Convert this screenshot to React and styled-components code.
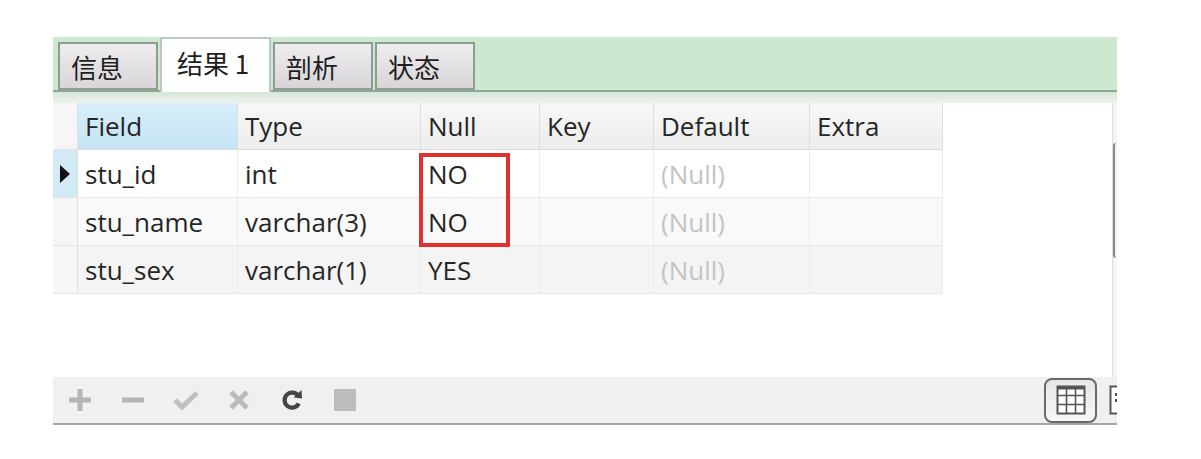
import React from "react";
import styled, { createGlobalStyle } from "styled-components";

const Global = createGlobalStyle`
  html, body {
    margin: 0;
    padding: 0;
    background: #ffffff;
  }
  body {
    font-family: "Open Sans", "Noto Sans", "Noto Sans CJK SC", sans-serif;
  }
`;

const columns = [
    { key: "field", title: "Field", width: 160 },
    { key: "type", title: "Type", width: 183 },
    { key: "nul", title: "Null", width: 119 },
    { key: "key", title: "Key", width: 114 },
    { key: "def", title: "Default", width: 156 },
    { key: "extra", title: "Extra", width: 133 }
];

const rows = [
    { field: "stu_id", type: "int", nul: "NO", key: "", def: null, extra: "" },
    { field: "stu_name", type: "varchar(3)", nul: "NO", key: "", def: null, extra: "" },
    { field: "stu_sex", type: "varchar(1)", nul: "YES", key: "", def: null, extra: "" }
];

const tabs = [
    { label: "信息", width: 100 },
    { label: "结果 1", width: 111, active: true },
    { label: "剖析", width: 100 },
    { label: "状态", width: 100 }
];

export default function App() {
    return (
        <>
            <Global />
            <Frame>
                <TabStrip>
                    {tabs.map((t) => (
                        <Tab key={t.label} $active={t.active} $w={t.width}>
                            {t.label}
                        </Tab>
                    ))}
                </TabStrip>
                <Shade />
                <Body>
                    <Grid>
                        <HeadRow>
                            <Indicator $head />
                            {columns.map((c) => (
                                <HeadCell key={c.key} $w={c.width} $sel={c.key === "field"}>
                                    {c.title}
                                </HeadCell>
                            ))}
                        </HeadRow>
                        {rows.map((r, i) => (
                            <Row key={r.field} $odd={i % 2 === 1} $last={i === 2}>
                                <Indicator $current={i === 0}>
                                    {i === 0 && <Arrow />}
                                </Indicator>
                                {columns.map((c) => (
                                    <Cell key={c.key} $w={c.width} $muted={r[c.key] === null}>
                                        {r[c.key] === null ? "(Null)" : r[c.key]}
                                    </Cell>
                                ))}
                            </Row>
                        ))}
                        <Highlight />
                    </Grid>
                    <Filler />
                    <ScrollEdge>
                        <Thumb />
                    </ScrollEdge>
                </Body>
                <Toolbar>
                    <ToolButton>
                        <svg width="24" height="24" viewBox="0 0 24 24">
                            <path d="M12 1v22M1 12h22" stroke="#b5b5b5" strokeWidth="5" />
                        </svg>
                    </ToolButton>
                    <ToolButton>
                        <svg width="24" height="24" viewBox="0 0 24 24">
                            <path d="M1 12h22" stroke="#b5b5b5" strokeWidth="5" />
                        </svg>
                    </ToolButton>
                    <ToolButton>
                        <svg width="26" height="24" viewBox="0 0 26 24">
                            <path d="M2 12l7 7L24 5" stroke="#c0c0c0" strokeWidth="5" fill="none" />
                        </svg>
                    </ToolButton>
                    <ToolButton>
                        <svg width="22" height="22" viewBox="0 0 22 22">
                            <path d="M3 3l16 16M19 3L3 19" stroke="#bbbbbb" strokeWidth="5" />
                        </svg>
                    </ToolButton>
                    <ToolButton>
                        <svg width="22" height="24" viewBox="0 0 22 24">
                            <path d="M17.5 8.2A7.5 7.5 0 1 0 17.8 15.5" stroke="#454545" strokeWidth="4.2" fill="none" />
                            <path d="M12.5 9.5L21 10.5L20.5 2Z" fill="#454545" />
                        </svg>
                    </ToolButton>
                    <ToolButton>
                        <svg width="22" height="22" viewBox="0 0 22 22">
                            <rect x="0" y="0" width="22" height="22" fill="#bcbcbc" />
                        </svg>
                    </ToolButton>
                    <Spacer />
                    <ViewButton $active>
                        <svg width="30" height="30" viewBox="0 0 30 30">
                            <rect x="1.5" y="1.5" width="27" height="27" fill="#fff" stroke="#555" strokeWidth="2" />
                            <path d="M1.5 3h27" stroke="#555" strokeWidth="3" />
                            <path d="M10.5 2v27M19.5 2v27M2 10.5h27M2 19.5h27" stroke="#555" strokeWidth="1.6" />
                        </svg>
                    </ViewButton>
                    <ViewButton>
                        <svg width="30" height="30" viewBox="0 0 30 30">
                            <rect x="1.5" y="1.5" width="27" height="27" fill="#fff" stroke="#555" strokeWidth="2" />
                            <path d="M7 8v3M7 14v3M11 8v3M11 14v3" stroke="#555" strokeWidth="2" />
                        </svg>
                    </ViewButton>
                </Toolbar>
            </Frame>
        </>
    );
}

const Frame = styled.div`
    width: 1064px;
    margin: 37px 0 0 53px;
    overflow: hidden;
`;

const TabStrip = styled.div`
    display: flex;
    align-items: flex-end;
    gap: 2px;
    height: 53px;
    padding-left: 5px;
    background: #cde8d1;
    border-bottom: 2px solid #8fa893;
`;

const Tab = styled.div`
    box-sizing: border-box;
    width: ${(p) => p.$w}px;
    height: ${(p) => (p.$active ? 55 : 48)}px;
    margin-bottom: ${(p) => (p.$active ? -2 : 0)}px;
    position: relative;
    z-index: ${(p) => (p.$active ? 1 : 0)};
    display: flex;
    align-items: center;
    padding-left: ${(p) => (p.$active ? 15 : 11)}px;
    padding-bottom: ${(p) => (p.$active ? 6 : 0)}px;
    font-family: "Noto Sans CJK SC", "Open Sans", sans-serif;
    font-size: 26px;
    color: #1e1e1e;
    background: ${(p) =>
        p.$active ? "#ffffff" : "linear-gradient(#efedef, #d9d5d9)"};
    border: 2px solid ${(p) => (p.$active ? "#b9c9bb" : "#8f9c91")};
    border-bottom: ${(p) => (p.$active ? "none" : "2px solid #8f9c91")};
`;

const Shade = styled.div`
    height: 11px;
    background: linear-gradient(#d6e6d9, #ecf2ed);
`;

const Body = styled.div`
    display: flex;
    height: 274px;
    background: #ffffff;
`;

const Grid = styled.div`
    position: relative;
    width: 890px;
    display: flex;
    flex-direction: column;
    align-self: flex-start;
`;

const HeadRow = styled.div`
    display: flex;
    height: 47px;
`;

const Row = styled.div`
    display: flex;
    height: 48px;
    background: ${(p) => (p.$odd ? "#f9f9f9" : "#ffffff")};
    ${(p) => p.$last && "background: #f4f4f4;"}
`;

const Indicator = styled.div`
    box-sizing: border-box;
    width: 25px;
    flex: none;
    display: flex;
    align-items: center;
    justify-content: center;
    background: ${(p) => (p.$current ? "#d2e9f6" : "#f6f6f6")};
    border-right: 1px solid #e2e2e2;
    border-bottom: 1px solid #e4e4e4;
`;

const Arrow = styled.span`
    width: 0;
    height: 0;
    border-top: 9px solid transparent;
    border-bottom: 9px solid transparent;
    border-left: 10px solid #111;
`;

const HeadCell = styled.div`
    box-sizing: border-box;
    width: ${(p) => p.$w}px;
    flex: none;
    display: flex;
    align-items: center;
    padding-left: 7px;
    font-size: 26px;
    color: #262626;
    background: ${(p) =>
        p.$sel ? "linear-gradient(#d8eef9, #c4e4f5)" : "linear-gradient(#f7f7f7, #ededed)"};
    border-right: 1px solid #dedede;
    border-bottom: 1px solid #dcdcdc;
`;

const Cell = styled.div`
    box-sizing: border-box;
    width: ${(p) => p.$w}px;
    flex: none;
    display: flex;
    align-items: center;
    padding-left: 7px;
    font-size: 26px;
    color: ${(p) => (p.$muted ? "#c4c4c4" : "#262626")};
    border-right: 1px solid #ececec;
    border-bottom: 1px solid #e8e8e8;
`;

const Highlight = styled.div`
    position: absolute;
    left: 366px;
    top: 50px;
    width: 91px;
    height: 94px;
    box-sizing: border-box;
    border: 4px solid #e03131;
`;

const Filler = styled.div`
    flex: 1;
`;

const ScrollEdge = styled.div`
    width: 4px;
    border-left: 1px solid #dedede;
    background: #f4f4f4;
    padding-top: 40px;
`;

const Thumb = styled.div`
    height: 115px;
    border-left: 2px solid #8a8a8a;
    border-radius: 3px 0 0 3px;
`;

const Toolbar = styled.div`
    display: flex;
    align-items: center;
    height: 46px;
    background: #f0f0f0;
    border-bottom: 2px solid #a6a6a6;
`;

const ToolButton = styled.div`
    width: 53px;
    height: 46px;
    display: flex;
    align-items: center;
    justify-content: center;
`;

const Spacer = styled.div`
    flex: 1;
`;

const ViewButton = styled.div`
    box-sizing: border-box;
    flex: none;
    width: 53px;
    height: 45px;
    margin-right: ${(p) => (p.$active ? 10 : -43)}px;
    display: flex;
    align-items: center;
    justify-content: ${(p) => (p.$active ? "center" : "flex-start")};
    border: 2px solid ${(p) => (p.$active ? "#6a6a6a" : "transparent")};
    border-radius: 8px;
    background: ${(p) => (p.$active ? "linear-gradient(#e6e6e6, #f7f7f7)" : "transparent")};
`;
